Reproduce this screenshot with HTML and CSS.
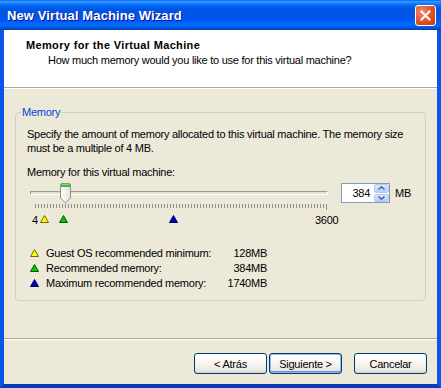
FILE: index.html
```html
<!doctype html>
<html lang="es">
<head>
  <meta charset="UTF-8">
  <title>New Virtual Machine Wizard</title>
  <link rel="stylesheet" href="styles.css">
</head>
<body>
  <div class="window">
    <div class="titlebar">
      <span class="title">New Virtual Machine Wizard</span>
      <button class="close-btn" type="button" aria-label="Cerrar">
        <svg width="11" height="11" viewBox="0 0 11 11"><path d="M1.5 1.5 L9.5 9.5 M9.5 1.5 L1.5 9.5" stroke="#fff" stroke-width="2" stroke-linecap="square"/></svg>
      </button>
    </div>
    <div class="frame">
      <div class="header">
        <div class="header-title">Memory for the Virtual Machine</div>
        <div class="header-sub">How much memory would you like to use for this virtual machine?</div>
      </div>
      <div class="content">
        <fieldset class="group">
          <legend>Memory</legend>
          <p class="desc">Specify the amount of memory allocated to this virtual machine. The memory size<br>must be a multiple of 4 MB.</p>
          <div class="field-label">Memory for this virtual machine:</div>
          <div class="slider-row">
            <div class="slider">
              <div class="rail">
                <div class="track"></div>
                <!-- 384 MB on a 4..3600 scale -->
                <svg class="thumb" style="left: 30px" width="11" height="21" viewBox="0 0 11 21">
                  <defs>
                    <linearGradient id="thumbFill" x1="0" y1="0" x2="1" y2="0">
                      <stop offset="0" stop-color="#ffffff"/>
                      <stop offset="1" stop-color="#e3e2da"/>
                    </linearGradient>
                  </defs>
                  <path d="M0.5 2 Q0.5 0.5 2 0.5 H9 Q10.5 0.5 10.5 2 V15 L5.5 20 L0.5 15 Z" fill="url(#thumbFill)" stroke="#8e8f8f"/>
                  <rect x="1" y="1" width="9" height="3" fill="#3db83d"/>
                  <rect x="2" y="1" width="7" height="1" fill="#7fe07f"/>
                </svg>
              </div>
              <div class="ticks"></div>
              <div class="scale">
                <span class="scale-min">4</span>
                <svg class="marker tri-yellow" style="left: 10px" width="9" height="8" viewBox="0 0 9 8"><polygon points="4.5,0.5 8.5,7.5 0.5,7.5"/></svg>
                <svg class="marker tri-green" style="left: 29px" width="9" height="8" viewBox="0 0 9 8"><polygon points="4.5,0.5 8.5,7.5 0.5,7.5"/></svg>
                <svg class="marker tri-blue" style="left: 139px" width="9" height="8" viewBox="0 0 9 8"><polygon points="4.5,0.5 8.5,7.5 0.5,7.5"/></svg>
                <span class="scale-max">3600</span>
              </div>
            </div>
            <div class="spin">
              <span class="spin-value">384</span>
              <div class="spin-buttons">
                <span class="spin-btn"><svg width="7" height="4" viewBox="0 0 7 4"><path d="M0.5 3.5 L3.5 0.8 L6.5 3.5" fill="none" stroke="#4d6185" stroke-width="1.4"/></svg></span>
                <span class="spin-btn"><svg width="7" height="4" viewBox="0 0 7 4"><path d="M0.5 0.5 L3.5 3.2 L6.5 0.5" fill="none" stroke="#4d6185" stroke-width="1.4"/></svg></span>
              </div>
            </div>
            <span class="unit">MB</span>
          </div>
          <ul class="legend-list">
            <li>
              <svg class="tri-yellow" width="9" height="8" viewBox="0 0 9 8"><polygon points="4.5,0.5 8.5,7.5 0.5,7.5"/></svg>
              <span class="legend-name">Guest OS recommended minimum:</span>
              <span class="legend-value">128MB</span>
            </li>
            <li>
              <svg class="tri-green" width="9" height="8" viewBox="0 0 9 8"><polygon points="4.5,0.5 8.5,7.5 0.5,7.5"/></svg>
              <span class="legend-name">Recommended memory:</span>
              <span class="legend-value">384MB</span>
            </li>
            <li>
              <svg class="tri-blue" width="9" height="8" viewBox="0 0 9 8"><polygon points="4.5,0.5 8.5,7.5 0.5,7.5"/></svg>
              <span class="legend-name">Maximum recommended memory:</span>
              <span class="legend-value">1740MB</span>
            </li>
          </ul>
        </fieldset>
      </div>
      <div class="separator"></div>
      <div class="buttons">
        <button type="button" class="btn">&lt; Atrás</button>
        <button type="button" class="btn btn-default">Siguiente &gt;</button>
        <button type="button" class="btn btn-cancel">Cancelar</button>
      </div>
    </div>
  </div>
</body>
</html>
```

FILE: styles.css
```css
* {
  box-sizing: border-box;
}
html, body {
  margin: 0;
}
body {
  font-family: 'Liberation Sans', Arial, sans-serif;
  font-size: 11px;
  letter-spacing: -0.25px;
  color: #000;
  background: #ECE9D8;
}
.window {
  width: 441px;
  height: 388px;
  display: flex;
  flex-direction: column;
}
.titlebar {
  flex: none;
  height: 30px;
  display: flex;
  align-items: center;
  justify-content: space-between;
  padding: 0 5px 0 7px;
  background: linear-gradient(
    to bottom,
    #0058ee 0%,
    #3593ff 4%,
    #288eff 8%,
    #127dff 12%,
    #036ffc 16%,
    #0262ee 22%,
    #0057e5 30%,
    #0054e3 40%,
    #0055eb 60%,
    #005bf5 70%,
    #026afe 80%,
    #0062ef 88%,
    #0052d6 94%,
    #0040ab 100%
  );
}
.title {
  color: #fff;
  font-size: 13px;
  font-weight: bold;
  letter-spacing: 0.1px;
  text-shadow: 1px 1px #0f1089;
}
.close-btn {
  width: 21px;
  height: 21px;
  padding: 0;
  border: 1px solid #fff;
  border-radius: 3px;
  background: radial-gradient(circle at 30% 30%, #f08a6e, #e0502a 55%, #c4350f);
  display: flex;
  align-items: center;
  justify-content: center;
  margin-top: 1px;
}
.frame {
  flex: 1;
  display: flex;
  flex-direction: column;
  border: 4px solid #0b55e8;
  border-top: 0;
  border-bottom-color: #0a3bbd;
  background: #ECE9D8;
}
.header {
  flex: none;
  height: 58px;
  background: #fff;
  border-bottom: 1px solid #aca899;
  padding: 9px 0 0 22px;
  line-height: 13px;
}
.header-title {
  font-weight: bold;
  letter-spacing: 0.35px;
}
.header-sub {
  margin: 2px 0 0 22px;
}
.content {
  flex: 1;
  border-top: 1px solid #fff;
  padding: 17px 11px 0 11px;
}
.group {
  margin: 0;
  padding: 8px 11px 10px 11px;
  border: 1px solid #d0d0bf;
  border-radius: 4px;
}
.group legend {
  color: #0046d5;
  line-height: 13px;
  padding: 0 1px;
  margin-left: -6px;
}
.desc {
  margin: 0;
  line-height: 14px;
}
.field-label {
  margin-top: 10px;
  line-height: 14px;
}
.slider-row {
  display: flex;
  align-items: flex-start;
  margin-top: 4px;
}
.slider {
  width: 298px;
  margin-left: 3px;
}
.rail {
  position: relative;
  height: 21px;
  padding-top: 8px;
}
.track {
  height: 4px;
  border-top: 1px solid #9d9c99;
  border-left: 1px solid #9d9c99;
  border-bottom: 1px solid #fff;
  border-right: 1px solid #fff;
  background: #e3e1d6;
}
.thumb {
  position: absolute;
  top: 0;
}
.ticks {
  position: relative;
  margin-left: 5px;
  width: 292px;
  height: 4px;
  background: repeating-linear-gradient(to right, #8c8c8c 0 1px, transparent 1px 3px);
}
.ticks::after {
  content: '';
  position: absolute;
  right: 0;
  top: 0;
  width: 1px;
  height: 6px;
  background: #8c8c8c;
}
.scale {
  position: relative;
  height: 14px;
  margin-top: 5px;
  line-height: 14px;
}
.scale-min {
  position: absolute;
  left: 2px;
  top: 0;
}
.scale-max {
  position: absolute;
  left: 285px;
  top: 0;
}
.marker {
  position: absolute;
  top: 2px;
}
.tri-yellow polygon {
  fill: #ffff00;
  stroke: #6b6b00;
}
.tri-green polygon {
  fill: #00c800;
  stroke: #005a00;
}
.tri-blue polygon {
  fill: #0000c8;
  stroke: #000060;
}
.spin {
  display: flex;
  align-items: stretch;
  width: 49px;
  height: 20px;
  margin-left: 13px;
  border: 1px solid #7f9db9;
  background: #fff;
}
.spin-value {
  flex: 1;
  text-align: right;
  padding-right: 4px;
  line-height: 18px;
}
.spin-buttons {
  width: 15px;
  display: flex;
  flex-direction: column;
  gap: 1px;
}
.spin-btn {
  flex: 1;
  display: flex;
  align-items: center;
  justify-content: center;
  border: 1px solid #b4c8f6;
  border-radius: 2px;
  background: linear-gradient(#dde7fc, #b7ccf7);
}
.unit {
  margin-left: 5px;
  line-height: 20px;
}
.legend-list {
  list-style: none;
  margin: 18px 0 0 3px;
  padding: 0;
  width: 237px;
}
.legend-list li {
  display: flex;
  align-items: center;
  height: 15px;
}
.legend-list svg {
  flex: none;
  margin-right: 7px;
}
.legend-name {
  flex: 1;
}
.legend-value {
  text-align: right;
}
.separator {
  flex: none;
  height: 2px;
  border-top: 1px solid #aca899;
  border-bottom: 1px solid #fff;
}
.buttons {
  flex: none;
  height: 44px;
  display: flex;
  justify-content: flex-end;
  align-items: flex-start;
  gap: 2px;
  padding: 13px 10px 0 0;
}
.btn {
  width: 73px;
  height: 21px;
  padding: 0;
  font-family: 'Liberation Sans', Arial, sans-serif;
  font-size: 11px;
  letter-spacing: -0.25px;
  color: #000;
  border: 1px solid #003c74;
  border-radius: 3px;
  background: linear-gradient(#ffffff 0%, #f4f3ee 60%, #e6e4dc 90%, #d6d0c5 100%);
}
.btn-default {
  box-shadow: inset 0 0 0 1px #98b8ea, inset 0 -1px 0 1px #6a8cdc;
}
.btn-cancel {
  margin-left: 10px;
}
```
